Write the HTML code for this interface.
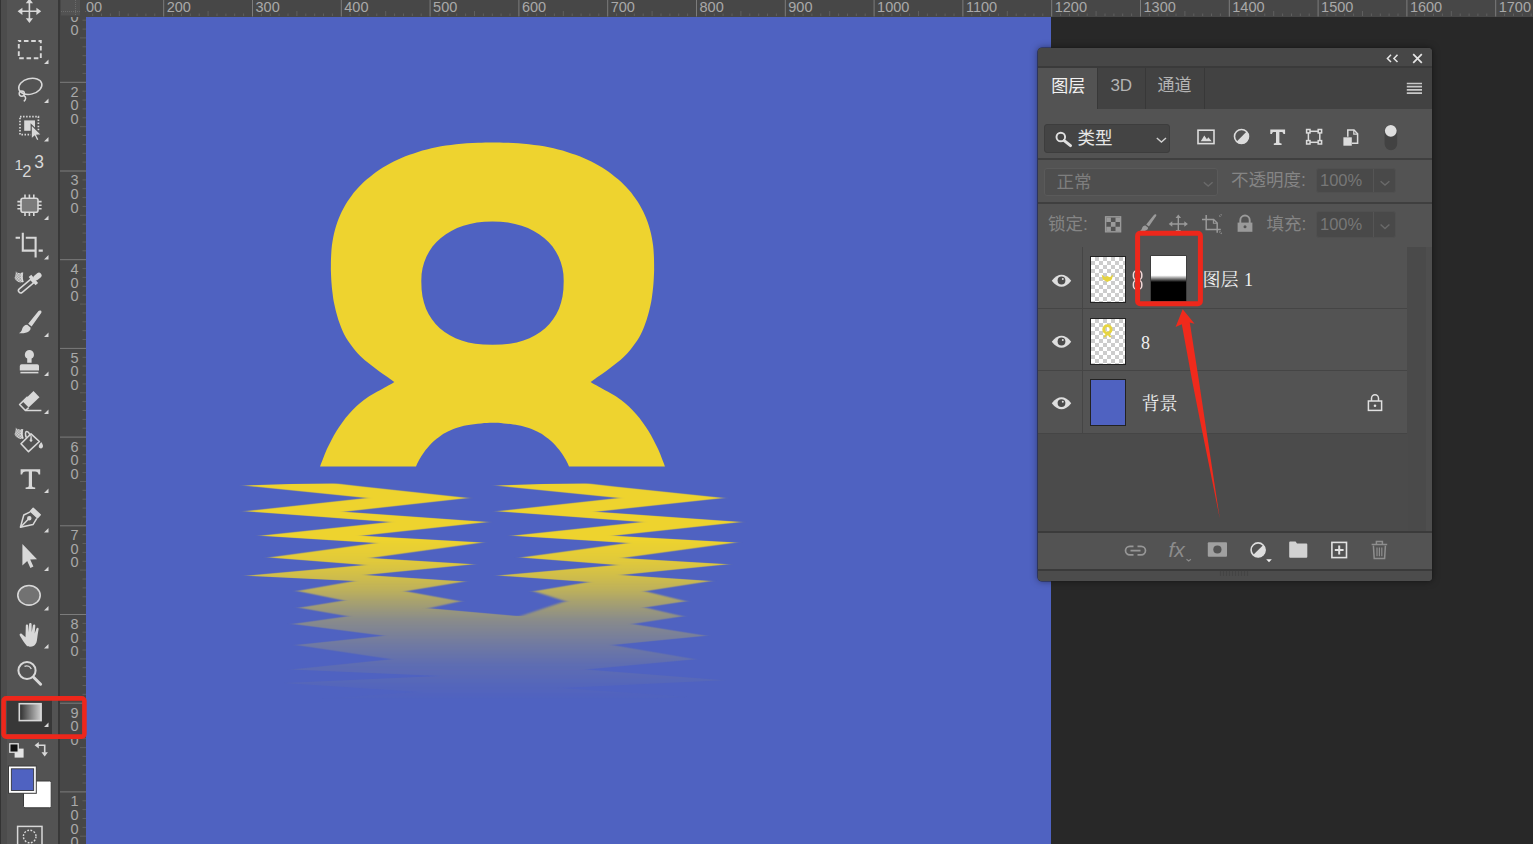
<!DOCTYPE html>
<html lang="zh-CN">
<head>
<meta charset="utf-8">
<title>Photoshop 图层蒙版</title>
<style>
*{box-sizing:border-box;margin:0;padding:0}
html,body{width:1533px;height:844px;overflow:hidden;background:#282828}
body{position:relative;font-family:"Liberation Sans","Noto Sans CJK SC",sans-serif;color:#ddd}
.abs{position:absolute}
#stage{position:absolute;left:0;top:0;width:1533px;height:844px;overflow:hidden;background:#282828}
#canvas{position:absolute;left:86px;top:17px;width:965px;height:827px;background:#4f62c1}
#art{position:absolute;left:0;top:0;width:1533px;height:844px}
#hruler{position:absolute;left:60px;top:0;width:1473px;height:17px;background:#474747}
#vruler{position:absolute;left:60px;top:17px;width:26px;height:827px;background:#474747}
#rulers{position:absolute;left:0;top:0;width:1533px;height:844px}
#rulers line{stroke:#5f5f5f;stroke-width:1}
#rulers line.M{stroke:#7c7c7c}
#rulers text{fill:#a9a9a9;font-family:"Liberation Sans",sans-serif;font-size:14.5px}
#corner{display:none}
#toolbar{position:absolute;left:0;top:0;width:58px;height:844px;background:#535353}
#toolbar .edge0{position:absolute;left:0;top:0;width:1px;height:844px;background:#333}
#toolbar .edge1{position:absolute;left:1px;top:0;width:6px;height:844px;background:#4c4c4c}
#tbline{position:absolute;left:58px;top:0;width:2px;height:844px;background:#383838}
#tools{position:absolute;left:0;top:0;width:90px;height:844px}
#gradsel{position:absolute;left:7px;top:700px;width:45px;height:34px;background:#383838}
/* panel */
#panel{position:absolute;left:1037.5px;top:47.5px;width:394px;height:533px;background:#535353;border-radius:4px;box-shadow:0 0 0 .6px rgba(30,30,30,.8),0 0 7px rgba(0,0,0,.5);overflow:hidden}
#panel .titlebar{position:absolute;left:0;top:0;width:394px;height:18.5px;background:#474747}
#panel .tline{position:absolute;left:0;top:18.5px;width:394px;height:1.5px;background:#3a3a3a}
#panel .tabbar{position:absolute;left:0;top:20px;width:394px;height:41.5px;background:#424242}
#panel .tab{position:absolute;top:20px;height:41.5px;font-size:17px;line-height:36px;text-align:center;color:#b4b4b4;border-right:1.5px solid #383838}
#panel .tab.on{background:#535353;color:#f2f2f2}
.sep{position:absolute;left:0;width:394px;height:2px;background:#3f3f3f}
.field{position:absolute;border-radius:3px;background:#454545;border:1px solid #3f3f3f}
.dim{color:#858585}
.lbl{position:absolute;font-size:16px;line-height:20px;white-space:nowrap}
.row{position:absolute;left:0;width:369px;height:62px;border-bottom:1.5px solid #454545}
.eyecol{position:absolute;left:0;top:0;width:45px;height:100%;border-right:1.5px solid #454545}
.lname{position:absolute;font-family:"Liberation Serif","Noto Serif CJK SC",serif;font-size:18px;line-height:20px;word-spacing:1px;color:#f0f0f0;white-space:nowrap}
.thumb{position:absolute;width:36.5px;height:47px;border:1px solid #222;background:#fff}
.checker{background-color:#fff;background-image:linear-gradient(45deg,#ccc 25%,transparent 25%,transparent 75%,#ccc 75%),linear-gradient(45deg,#ccc 25%,transparent 25%,transparent 75%,#ccc 75%);background-size:8px 8px;background-position:0 0,4px 4px}
#scrollcol{position:absolute;left:369.5px;top:199.500px;width:24.5px;height:284px;background:#4a4a4a}
#scrollcol i{position:absolute;right:0;top:0;width:6px;height:100%;background:#4e4e4e}
#empty{position:absolute;left:0;top:386.5px;width:370px;height:97px;background:#4b4b4b}
#botbar{position:absolute;left:0;top:483.500px;width:394px;height:38px;background:#535353;border-top:2px solid #3b3b3b}
#grip{position:absolute;left:0;top:521px;width:394px;height:12px;background:#4c4c4c;border-top:2px solid #3a3a3a}
#picons{position:absolute;left:0;top:0;width:394px;height:533px}
#anno{position:absolute;left:0;top:0;width:1533px;height:844px}
</style>
</head>
<body>
<div id="stage">
  <div id="canvas"></div>
  <svg id="art" viewBox="0 0 1533 844">
    <defs>
      <linearGradient id="fade" gradientUnits="userSpaceOnUse" x1="0" y1="540" x2="0" y2="700">
        <stop offset="0" stop-color="#fff" stop-opacity="1"/>
        <stop offset="0.125" stop-color="#fff" stop-opacity="0.92"/>
        <stop offset="0.22" stop-color="#fff" stop-opacity="0.82"/>
        <stop offset="0.31" stop-color="#fff" stop-opacity="0.7"/>
        <stop offset="0.38" stop-color="#fff" stop-opacity="0.57"/>
        <stop offset="0.5" stop-color="#fff" stop-opacity="0.37"/>
        <stop offset="0.656" stop-color="#fff" stop-opacity="0.21"/>
        <stop offset="0.78" stop-color="#fff" stop-opacity="0.1"/>
        <stop offset="0.906" stop-color="#fff" stop-opacity="0.04"/>
        <stop offset="1" stop-color="#fff" stop-opacity="0"/>
      </linearGradient>
      <mask id="fm" maskUnits="userSpaceOnUse" x="86" y="17" width="965" height="827">
        <rect x="86" y="17" width="965" height="524" fill="#fff"/>
        <rect x="86" y="540" width="965" height="304" fill="url(#fade)"/>
      </mask>
      <filter id="hb" x="-5%" y="-5%" width="110%" height="110%"><feGaussianBlur stdDeviation="3.4 0.4"/></filter>
    </defs>
    <path d="M394.4,381.9 C393.6,381.4 391.8,380.1 389.8,378.7 C387.8,377.3 385.0,375.4 382.6,373.7 C380.2,372.0 377.9,370.2 375.5,368.4 C373.1,366.6 370.8,365.0 368.4,363.1 C366.0,361.2 363.7,359.3 361.3,357.0 C358.9,354.7 356.8,352.5 354.2,349.2 C351.6,345.9 348.2,341.3 345.9,337.4 C343.6,333.4 341.9,329.4 340.4,325.5 C338.8,321.6 337.7,317.6 336.6,313.7 C335.5,309.8 334.5,305.4 333.8,301.8 C333.1,298.2 332.8,295.1 332.4,292.0 C332.0,288.9 331.8,286.4 331.5,282.9 C331.2,279.4 331.0,274.1 330.9,271.1 C330.8,268.1 330.9,267.8 330.9,265.0 C330.9,262.2 331.0,257.6 331.2,254.3 C331.3,251.1 331.6,248.4 331.9,245.5 C332.3,242.7 332.7,240.0 333.2,237.4 C333.7,234.7 334.3,232.2 335.0,229.7 C335.7,227.2 336.4,224.7 337.3,222.3 C338.1,219.9 339.1,217.6 340.1,215.3 C341.1,213.0 342.2,210.7 343.4,208.5 C344.5,206.3 345.8,204.2 347.1,202.1 C348.5,200.0 349.9,197.9 351.4,195.9 C352.9,193.9 354.4,192.0 356.1,190.1 C357.7,188.2 359.5,186.3 361.3,184.5 C363.1,182.7 364.9,181.0 366.9,179.3 C368.8,177.6 370.9,176.0 372.9,174.4 C375.0,172.8 377.2,171.3 379.4,169.8 C381.7,168.3 384.0,166.9 386.4,165.5 C388.7,164.1 391.2,162.8 393.7,161.6 C396.2,160.3 398.8,159.1 401.4,158.0 C404.0,156.9 406.7,155.8 409.5,154.8 C412.3,153.8 415.1,152.8 418.0,151.9 C420.9,151.0 423.9,150.2 426.9,149.5 C429.9,148.7 433.0,148.0 436.2,147.3 C439.4,146.7 442.6,146.1 445.9,145.6 C449.2,145.1 452.6,144.6 456.1,144.2 C459.6,143.9 463.1,143.5 466.8,143.3 C470.6,143.0 474.2,142.8 478.4,142.7 C482.7,142.6 487.8,142.5 492.5,142.5 C497.2,142.5 502.3,142.6 506.6,142.7 C510.8,142.8 514.4,143.0 518.2,143.3 C521.9,143.5 525.4,143.9 528.9,144.2 C532.4,144.6 535.8,145.1 539.1,145.6 C542.4,146.1 545.6,146.7 548.8,147.3 C552.0,148.0 555.1,148.7 558.1,149.5 C561.1,150.2 564.1,151.0 567.0,151.9 C569.9,152.8 572.7,153.8 575.5,154.8 C578.3,155.8 581.0,156.9 583.6,158.0 C586.2,159.1 588.8,160.3 591.3,161.6 C593.8,162.8 596.3,164.1 598.6,165.5 C601.0,166.9 603.3,168.3 605.6,169.8 C607.8,171.3 610.0,172.8 612.1,174.4 C614.1,176.0 616.2,177.6 618.1,179.3 C620.1,181.0 621.9,182.7 623.7,184.5 C625.5,186.3 627.3,188.2 628.9,190.1 C630.6,192.0 632.1,193.9 633.6,195.9 C635.1,197.9 636.5,200.0 637.9,202.1 C639.2,204.2 640.5,206.3 641.6,208.5 C642.8,210.7 643.9,213.0 644.9,215.3 C645.9,217.6 646.9,219.9 647.7,222.3 C648.6,224.7 649.3,227.2 650.0,229.7 C650.7,232.2 651.3,234.7 651.8,237.4 C652.3,240.0 652.7,242.7 653.1,245.5 C653.4,248.4 653.7,251.1 653.8,254.3 C654.0,257.6 654.1,262.2 654.1,265.0 C654.1,267.8 654.2,268.1 654.1,271.1 C654.0,274.1 653.8,279.4 653.5,282.9 C653.2,286.4 653.0,288.9 652.6,292.0 C652.2,295.1 651.9,298.2 651.2,301.8 C650.5,305.4 649.5,309.8 648.4,313.7 C647.3,317.6 646.1,321.6 644.6,325.5 C643.1,329.4 641.4,333.4 639.1,337.4 C636.8,341.3 633.4,345.9 630.8,349.2 C628.2,352.5 626.1,354.7 623.7,357.0 C621.3,359.3 619.0,361.2 616.6,363.1 C614.2,365.0 611.9,366.6 609.5,368.4 C607.1,370.2 604.8,372.0 602.4,373.7 C600.0,375.4 597.2,377.3 595.2,378.7 C593.2,380.1 591.4,381.4 590.6,381.9 C591.4,382.4 593.2,383.7 595.2,384.8 C597.2,385.9 599.3,387.0 602.4,388.7 C605.5,390.4 610.6,393.1 613.7,395.0 C616.8,396.9 618.6,398.1 621.1,400.0 C623.6,401.9 626.1,403.8 628.6,406.2 C631.1,408.6 633.6,411.4 636.0,414.1 C638.4,416.8 640.6,419.6 642.7,422.4 C644.8,425.2 646.7,428.2 648.5,431.1 C650.3,434.0 651.8,436.7 653.4,439.8 C655.0,442.9 656.9,446.6 658.4,449.8 C659.9,453.0 661.0,456.1 662.1,458.9 C663.2,461.7 664.5,465.2 665.0,466.5 L569.0,466.5 C568.5,465.4 567.2,462.2 565.8,459.8 C564.4,457.4 562.8,454.6 560.8,451.9 C558.8,449.2 556.1,445.8 553.7,443.4 C551.3,441.0 549.0,439.2 546.6,437.4 C544.2,435.6 542.5,434.2 539.5,432.7 C536.5,431.1 532.4,429.3 528.8,428.1 C525.2,426.9 522.2,426.1 518.1,425.3 C514.0,424.5 508.2,423.8 503.9,423.4 C499.6,423.0 496.3,422.8 492.5,422.8 C488.7,422.8 485.4,423.0 481.1,423.4 C476.8,423.8 471.0,424.5 466.9,425.3 C462.8,426.1 459.8,426.9 456.2,428.1 C452.6,429.3 448.5,431.1 445.5,432.7 C442.5,434.2 440.8,435.6 438.4,437.4 C436.0,439.2 433.7,441.0 431.3,443.4 C428.9,445.8 426.2,449.2 424.2,451.9 C422.2,454.6 420.6,457.4 419.2,459.8 C417.8,462.2 416.5,465.4 416.0,466.5 L320.0,466.5 C320.5,465.2 321.8,461.7 322.9,458.9 C324.0,456.1 325.2,453.0 326.6,449.8 C328.1,446.6 330.0,442.9 331.6,439.8 C333.2,436.7 334.7,434.0 336.5,431.1 C338.3,428.2 340.2,425.2 342.3,422.4 C344.4,419.6 346.6,416.8 349.0,414.1 C351.4,411.4 353.9,408.6 356.4,406.2 C358.9,403.8 361.4,401.9 363.9,400.0 C366.4,398.1 368.2,396.9 371.3,395.0 C374.4,393.1 379.5,390.4 382.6,388.7 C385.7,387.0 387.8,385.9 389.8,384.8 C391.8,383.7 393.6,382.4 394.4,381.9Z M563.7,281.0 L563.4,289.5 L562.5,296.4 L561.0,302.8 L559.0,308.7 L556.3,314.2 L553.1,319.3 L549.4,323.9 L545.2,328.2 L540.4,332.0 L535.2,335.3 L529.5,338.2 L523.4,340.6 L516.8,342.4 L509.7,343.7 L501.9,344.5 L492.5,344.8 L483.1,344.5 L475.3,343.7 L468.2,342.4 L461.6,340.6 L455.5,338.2 L449.8,335.3 L444.6,332.0 L439.8,328.2 L435.6,323.9 L431.9,319.3 L428.7,314.2 L426.0,308.7 L424.0,302.8 L422.5,296.4 L421.6,289.5 L421.3,281.0 L421.6,274.1 L422.6,268.0 L424.2,262.2 L426.4,256.7 L429.2,251.4 L432.5,246.6 L436.5,242.0 L440.9,237.9 L445.9,234.2 L451.3,230.9 L457.1,228.1 L463.4,225.7 L470.0,223.9 L476.9,222.6 L484.3,221.8 L492.5,221.5 L500.7,221.8 L508.1,222.6 L515.0,223.9 L521.6,225.7 L527.9,228.1 L533.7,230.9 L539.1,234.2 L544.1,237.9 L548.5,242.0 L552.5,246.6 L555.8,251.4 L558.6,256.7 L560.8,262.2 L562.4,268.0 L563.4,274.1Z" fill="#eed32f" fill-rule="evenodd"/>
    <g mask="url(#fm)"><polygon points="244.0,485.6 290.0,484.0 336.0,483.4 362.0,486.6 468.2,498.1 343.8,511.8 487.7,521.9 361.5,535.8 482.4,542.5 370.4,558.0 473.5,564.2 365.0,574.9 464.6,581.6 405.6,591.3 460.4,601.3 429.0,608.2 519.9,616.3 565.3,601.3 534.0,591.3 588.7,581.9 498.0,575.6 617.1,565.1 521.1,557.5 627.8,542.9 512.2,535.8 642.0,521.9 497.1,511.2 618.9,498.1 496.0,485.6 542.0,484.0 588.0,483.4 614.0,486.6 723.5,498.1 595.8,511.8 741.0,521.9 613.5,535.8 736.0,542.5 622.4,558.0 728.0,564.2 621.0,574.9 710.8,581.0 645.0,591.3 685.8,601.3 645.0,607.6 682.7,616.3 632.6,623.9 706.1,635.7 612.2,645.1 695.2,659.2 585.6,669.6 723.4,680.2 560.0,688.0 690.0,697.0 540.0,704.0 330.0,712.0 300.0,700.0 420.0,692.0 285.0,683.0 440.0,676.0 291.3,669.6 391.5,659.2 296.0,645.1 383.7,635.7 292.9,623.9 347.7,616.3 299.3,607.8 343.8,600.6 297.5,590.9 354.4,581.1 246.0,575.8 365.1,565.1 269.1,557.5 375.8,542.9 260.2,535.8 390.0,521.9 245.1,511.2 366.9,498.1" fill="#eed32f" filter="url(#hb)"/></g>
  </svg>

  <div id="hruler"></div>
  <div id="vruler"></div>
  <div id="corner"></div>
  <svg id="rulers" viewBox="0 0 1533 844">
    <g><line x1="82.5" y1="20.2" x2="86" y2="20.2" /><line x1="82.5" y1="29.1" x2="86" y2="29.1" /><line x1="80" y1="37.9" x2="86" y2="37.9" /><line x1="82.5" y1="46.8" x2="86" y2="46.8" /><line x1="82.5" y1="55.7" x2="86" y2="55.7" /><line x1="82.5" y1="64.6" x2="86" y2="64.6" /><line x1="82.5" y1="73.4" x2="86" y2="73.4" /><line class="M" x1="60" y1="82.3" x2="86" y2="82.3" /><line x1="82.5" y1="91.2" x2="86" y2="91.2" /><line x1="82.5" y1="100.0" x2="86" y2="100.0" /><line x1="82.5" y1="108.9" x2="86" y2="108.9" /><line x1="82.5" y1="117.8" x2="86" y2="117.8" /><line x1="80" y1="126.7" x2="86" y2="126.7" /><line x1="82.5" y1="135.5" x2="86" y2="135.5" /><line x1="82.5" y1="144.4" x2="86" y2="144.4" /><line x1="82.5" y1="153.3" x2="86" y2="153.3" /><line x1="82.5" y1="162.1" x2="86" y2="162.1" /><line class="M" x1="60" y1="171.0" x2="86" y2="171.0" /><line x1="82.5" y1="179.9" x2="86" y2="179.9" /><line x1="82.5" y1="188.7" x2="86" y2="188.7" /><line x1="82.5" y1="197.6" x2="86" y2="197.6" /><line x1="82.5" y1="206.5" x2="86" y2="206.5" /><line x1="80" y1="215.3" x2="86" y2="215.3" /><line x1="82.5" y1="224.2" x2="86" y2="224.2" /><line x1="82.5" y1="233.1" x2="86" y2="233.1" /><line x1="82.5" y1="242.0" x2="86" y2="242.0" /><line x1="82.5" y1="250.8" x2="86" y2="250.8" /><line class="M" x1="60" y1="259.7" x2="86" y2="259.7" /><line x1="82.5" y1="268.6" x2="86" y2="268.6" /><line x1="82.5" y1="277.4" x2="86" y2="277.4" /><line x1="82.5" y1="286.3" x2="86" y2="286.3" /><line x1="82.5" y1="295.2" x2="86" y2="295.2" /><line x1="80" y1="304.1" x2="86" y2="304.1" /><line x1="82.5" y1="312.9" x2="86" y2="312.9" /><line x1="82.5" y1="321.8" x2="86" y2="321.8" /><line x1="82.5" y1="330.7" x2="86" y2="330.7" /><line x1="82.5" y1="339.5" x2="86" y2="339.5" /><line class="M" x1="60" y1="348.4" x2="86" y2="348.4" /><line x1="82.5" y1="357.3" x2="86" y2="357.3" /><line x1="82.5" y1="366.1" x2="86" y2="366.1" /><line x1="82.5" y1="375.0" x2="86" y2="375.0" /><line x1="82.5" y1="383.9" x2="86" y2="383.9" /><line x1="80" y1="392.8" x2="86" y2="392.8" /><line x1="82.5" y1="401.6" x2="86" y2="401.6" /><line x1="82.5" y1="410.5" x2="86" y2="410.5" /><line x1="82.5" y1="419.4" x2="86" y2="419.4" /><line x1="82.5" y1="428.2" x2="86" y2="428.2" /><line class="M" x1="60" y1="437.1" x2="86" y2="437.1" /><line x1="82.5" y1="446.0" x2="86" y2="446.0" /><line x1="82.5" y1="454.8" x2="86" y2="454.8" /><line x1="82.5" y1="463.7" x2="86" y2="463.7" /><line x1="82.5" y1="472.6" x2="86" y2="472.6" /><line x1="80" y1="481.5" x2="86" y2="481.5" /><line x1="82.5" y1="490.3" x2="86" y2="490.3" /><line x1="82.5" y1="499.2" x2="86" y2="499.2" /><line x1="82.5" y1="508.1" x2="86" y2="508.1" /><line x1="82.5" y1="516.9" x2="86" y2="516.9" /><line class="M" x1="60" y1="525.8" x2="86" y2="525.8" /><line x1="82.5" y1="534.7" x2="86" y2="534.7" /><line x1="82.5" y1="543.5" x2="86" y2="543.5" /><line x1="82.5" y1="552.4" x2="86" y2="552.4" /><line x1="82.5" y1="561.3" x2="86" y2="561.3" /><line x1="80" y1="570.1" x2="86" y2="570.1" /><line x1="82.5" y1="579.0" x2="86" y2="579.0" /><line x1="82.5" y1="587.9" x2="86" y2="587.9" /><line x1="82.5" y1="596.8" x2="86" y2="596.8" /><line x1="82.5" y1="605.6" x2="86" y2="605.6" /><line class="M" x1="60" y1="614.5" x2="86" y2="614.5" /><line x1="82.5" y1="623.4" x2="86" y2="623.4" /><line x1="82.5" y1="632.2" x2="86" y2="632.2" /><line x1="82.5" y1="641.1" x2="86" y2="641.1" /><line x1="82.5" y1="650.0" x2="86" y2="650.0" /><line x1="80" y1="658.9" x2="86" y2="658.9" /><line x1="82.5" y1="667.7" x2="86" y2="667.7" /><line x1="82.5" y1="676.6" x2="86" y2="676.6" /><line x1="82.5" y1="685.5" x2="86" y2="685.5" /><line x1="82.5" y1="694.3" x2="86" y2="694.3" /><line class="M" x1="60" y1="703.2" x2="86" y2="703.2" /><line x1="82.5" y1="712.1" x2="86" y2="712.1" /><line x1="82.5" y1="720.9" x2="86" y2="720.9" /><line x1="82.5" y1="729.8" x2="86" y2="729.8" /><line x1="82.5" y1="738.7" x2="86" y2="738.7" /><line x1="80" y1="747.6" x2="86" y2="747.6" /><line x1="82.5" y1="756.4" x2="86" y2="756.4" /><line x1="82.5" y1="765.3" x2="86" y2="765.3" /><line x1="82.5" y1="774.2" x2="86" y2="774.2" /><line x1="82.5" y1="783.0" x2="86" y2="783.0" /><line class="M" x1="60" y1="791.9" x2="86" y2="791.9" /><line x1="82.5" y1="800.8" x2="86" y2="800.8" /><line x1="82.5" y1="809.6" x2="86" y2="809.6" /><line x1="82.5" y1="818.5" x2="86" y2="818.5" /><line x1="82.5" y1="827.4" x2="86" y2="827.4" /><line x1="80" y1="836.2" x2="86" y2="836.2" /></g>
    <g><text x="74.5" y="8.0" text-anchor="middle">1</text><text x="74.5" y="21.6" text-anchor="middle">0</text><text x="74.5" y="35.2" text-anchor="middle">0</text><text x="74.5" y="96.7" text-anchor="middle">2</text><text x="74.5" y="110.3" text-anchor="middle">0</text><text x="74.5" y="123.9" text-anchor="middle">0</text><text x="74.5" y="185.4" text-anchor="middle">3</text><text x="74.5" y="199.0" text-anchor="middle">0</text><text x="74.5" y="212.6" text-anchor="middle">0</text><text x="74.5" y="274.1" text-anchor="middle">4</text><text x="74.5" y="287.7" text-anchor="middle">0</text><text x="74.5" y="301.3" text-anchor="middle">0</text><text x="74.5" y="362.8" text-anchor="middle">5</text><text x="74.5" y="376.4" text-anchor="middle">0</text><text x="74.5" y="390.0" text-anchor="middle">0</text><text x="74.5" y="451.5" text-anchor="middle">6</text><text x="74.5" y="465.1" text-anchor="middle">0</text><text x="74.5" y="478.7" text-anchor="middle">0</text><text x="74.5" y="540.2" text-anchor="middle">7</text><text x="74.5" y="553.8" text-anchor="middle">0</text><text x="74.5" y="567.4" text-anchor="middle">0</text><text x="74.5" y="628.9" text-anchor="middle">8</text><text x="74.5" y="642.5" text-anchor="middle">0</text><text x="74.5" y="656.1" text-anchor="middle">0</text><text x="74.5" y="717.6" text-anchor="middle">9</text><text x="74.5" y="731.2" text-anchor="middle">0</text><text x="74.5" y="744.8" text-anchor="middle">0</text><text x="74.5" y="806.3" text-anchor="middle">1</text><text x="74.5" y="819.9" text-anchor="middle">0</text><text x="74.5" y="833.5" text-anchor="middle">0</text><text x="74.5" y="847.1" text-anchor="middle">0</text><text x="74.5" y="895.0" text-anchor="middle">1</text><text x="74.5" y="908.6" text-anchor="middle">1</text><text x="74.5" y="922.2" text-anchor="middle">0</text><text x="74.5" y="935.8" text-anchor="middle">0</text></g>
    <rect x="60" y="0" width="1473" height="17" fill="#474747"/>
    <g><line x1="66.0" y1="13.5" x2="66.0" y2="16" /><line class="M" x1="74.9" y1="0" x2="74.9" y2="16.5" /><line x1="83.8" y1="13.5" x2="83.8" y2="16" /><line x1="92.7" y1="13.5" x2="92.7" y2="16" /><line x1="101.5" y1="13.5" x2="101.5" y2="16" /><line x1="110.4" y1="13.5" x2="110.4" y2="16" /><line x1="119.3" y1="11" x2="119.3" y2="16" /><line x1="128.2" y1="13.5" x2="128.2" y2="16" /><line x1="137.1" y1="13.5" x2="137.1" y2="16" /><line x1="145.9" y1="13.5" x2="145.9" y2="16" /><line x1="154.8" y1="13.5" x2="154.8" y2="16" /><line class="M" x1="163.7" y1="0" x2="163.7" y2="16.5" /><line x1="172.6" y1="13.5" x2="172.6" y2="16" /><line x1="181.5" y1="13.5" x2="181.5" y2="16" /><line x1="190.3" y1="13.5" x2="190.3" y2="16" /><line x1="199.2" y1="13.5" x2="199.2" y2="16" /><line x1="208.1" y1="11" x2="208.1" y2="16" /><line x1="217.0" y1="13.5" x2="217.0" y2="16" /><line x1="225.9" y1="13.5" x2="225.9" y2="16" /><line x1="234.7" y1="13.5" x2="234.7" y2="16" /><line x1="243.6" y1="13.5" x2="243.6" y2="16" /><line class="M" x1="252.5" y1="0" x2="252.5" y2="16.5" /><line x1="261.4" y1="13.5" x2="261.4" y2="16" /><line x1="270.3" y1="13.5" x2="270.3" y2="16" /><line x1="279.1" y1="13.5" x2="279.1" y2="16" /><line x1="288.0" y1="13.5" x2="288.0" y2="16" /><line x1="296.9" y1="11" x2="296.9" y2="16" /><line x1="305.8" y1="13.5" x2="305.8" y2="16" /><line x1="314.7" y1="13.5" x2="314.7" y2="16" /><line x1="323.5" y1="13.5" x2="323.5" y2="16" /><line x1="332.4" y1="13.5" x2="332.4" y2="16" /><line class="M" x1="341.3" y1="0" x2="341.3" y2="16.5" /><line x1="350.2" y1="13.5" x2="350.2" y2="16" /><line x1="359.1" y1="13.5" x2="359.1" y2="16" /><line x1="367.9" y1="13.5" x2="367.9" y2="16" /><line x1="376.8" y1="13.5" x2="376.8" y2="16" /><line x1="385.7" y1="11" x2="385.7" y2="16" /><line x1="394.6" y1="13.5" x2="394.6" y2="16" /><line x1="403.5" y1="13.5" x2="403.5" y2="16" /><line x1="412.3" y1="13.5" x2="412.3" y2="16" /><line x1="421.2" y1="13.5" x2="421.2" y2="16" /><line class="M" x1="430.1" y1="0" x2="430.1" y2="16.5" /><line x1="439.0" y1="13.5" x2="439.0" y2="16" /><line x1="447.9" y1="13.5" x2="447.9" y2="16" /><line x1="456.7" y1="13.5" x2="456.7" y2="16" /><line x1="465.6" y1="13.5" x2="465.6" y2="16" /><line x1="474.5" y1="11" x2="474.5" y2="16" /><line x1="483.4" y1="13.5" x2="483.4" y2="16" /><line x1="492.3" y1="13.5" x2="492.3" y2="16" /><line x1="501.1" y1="13.5" x2="501.1" y2="16" /><line x1="510.0" y1="13.5" x2="510.0" y2="16" /><line class="M" x1="518.9" y1="0" x2="518.9" y2="16.5" /><line x1="527.8" y1="13.5" x2="527.8" y2="16" /><line x1="536.7" y1="13.5" x2="536.7" y2="16" /><line x1="545.5" y1="13.5" x2="545.5" y2="16" /><line x1="554.4" y1="13.5" x2="554.4" y2="16" /><line x1="563.3" y1="11" x2="563.3" y2="16" /><line x1="572.2" y1="13.5" x2="572.2" y2="16" /><line x1="581.1" y1="13.5" x2="581.1" y2="16" /><line x1="589.9" y1="13.5" x2="589.9" y2="16" /><line x1="598.8" y1="13.5" x2="598.8" y2="16" /><line class="M" x1="607.7" y1="0" x2="607.7" y2="16.5" /><line x1="616.6" y1="13.5" x2="616.6" y2="16" /><line x1="625.5" y1="13.5" x2="625.5" y2="16" /><line x1="634.3" y1="13.5" x2="634.3" y2="16" /><line x1="643.2" y1="13.5" x2="643.2" y2="16" /><line x1="652.1" y1="11" x2="652.1" y2="16" /><line x1="661.0" y1="13.5" x2="661.0" y2="16" /><line x1="669.9" y1="13.5" x2="669.9" y2="16" /><line x1="678.7" y1="13.5" x2="678.7" y2="16" /><line x1="687.6" y1="13.5" x2="687.6" y2="16" /><line class="M" x1="696.5" y1="0" x2="696.5" y2="16.5" /><line x1="705.4" y1="13.5" x2="705.4" y2="16" /><line x1="714.3" y1="13.5" x2="714.3" y2="16" /><line x1="723.1" y1="13.5" x2="723.1" y2="16" /><line x1="732.0" y1="13.5" x2="732.0" y2="16" /><line x1="740.9" y1="11" x2="740.9" y2="16" /><line x1="749.8" y1="13.5" x2="749.8" y2="16" /><line x1="758.7" y1="13.5" x2="758.7" y2="16" /><line x1="767.5" y1="13.5" x2="767.5" y2="16" /><line x1="776.4" y1="13.5" x2="776.4" y2="16" /><line class="M" x1="785.3" y1="0" x2="785.3" y2="16.5" /><line x1="794.2" y1="13.5" x2="794.2" y2="16" /><line x1="803.1" y1="13.5" x2="803.1" y2="16" /><line x1="811.9" y1="13.5" x2="811.9" y2="16" /><line x1="820.8" y1="13.5" x2="820.8" y2="16" /><line x1="829.7" y1="11" x2="829.7" y2="16" /><line x1="838.6" y1="13.5" x2="838.6" y2="16" /><line x1="847.5" y1="13.5" x2="847.5" y2="16" /><line x1="856.3" y1="13.5" x2="856.3" y2="16" /><line x1="865.2" y1="13.5" x2="865.2" y2="16" /><line class="M" x1="874.1" y1="0" x2="874.1" y2="16.5" /><line x1="883.0" y1="13.5" x2="883.0" y2="16" /><line x1="891.9" y1="13.5" x2="891.9" y2="16" /><line x1="900.7" y1="13.5" x2="900.7" y2="16" /><line x1="909.6" y1="13.5" x2="909.6" y2="16" /><line x1="918.5" y1="11" x2="918.5" y2="16" /><line x1="927.4" y1="13.5" x2="927.4" y2="16" /><line x1="936.3" y1="13.5" x2="936.3" y2="16" /><line x1="945.1" y1="13.5" x2="945.1" y2="16" /><line x1="954.0" y1="13.5" x2="954.0" y2="16" /><line class="M" x1="962.9" y1="0" x2="962.9" y2="16.5" /><line x1="971.8" y1="13.5" x2="971.8" y2="16" /><line x1="980.7" y1="13.5" x2="980.7" y2="16" /><line x1="989.5" y1="13.5" x2="989.5" y2="16" /><line x1="998.4" y1="13.5" x2="998.4" y2="16" /><line x1="1007.3" y1="11" x2="1007.3" y2="16" /><line x1="1016.2" y1="13.5" x2="1016.2" y2="16" /><line x1="1025.1" y1="13.5" x2="1025.1" y2="16" /><line x1="1033.9" y1="13.5" x2="1033.9" y2="16" /><line x1="1042.8" y1="13.5" x2="1042.8" y2="16" /><line class="M" x1="1051.7" y1="0" x2="1051.7" y2="16.5" /><line x1="1060.6" y1="13.5" x2="1060.6" y2="16" /><line x1="1069.5" y1="13.5" x2="1069.5" y2="16" /><line x1="1078.3" y1="13.5" x2="1078.3" y2="16" /><line x1="1087.2" y1="13.5" x2="1087.2" y2="16" /><line x1="1096.1" y1="11" x2="1096.1" y2="16" /><line x1="1105.0" y1="13.5" x2="1105.0" y2="16" /><line x1="1113.9" y1="13.5" x2="1113.9" y2="16" /><line x1="1122.7" y1="13.5" x2="1122.7" y2="16" /><line x1="1131.6" y1="13.5" x2="1131.6" y2="16" /><line class="M" x1="1140.5" y1="0" x2="1140.5" y2="16.5" /><line x1="1149.4" y1="13.5" x2="1149.4" y2="16" /><line x1="1158.3" y1="13.5" x2="1158.3" y2="16" /><line x1="1167.1" y1="13.5" x2="1167.1" y2="16" /><line x1="1176.0" y1="13.5" x2="1176.0" y2="16" /><line x1="1184.9" y1="11" x2="1184.9" y2="16" /><line x1="1193.8" y1="13.5" x2="1193.8" y2="16" /><line x1="1202.7" y1="13.5" x2="1202.7" y2="16" /><line x1="1211.5" y1="13.5" x2="1211.5" y2="16" /><line x1="1220.4" y1="13.5" x2="1220.4" y2="16" /><line class="M" x1="1229.3" y1="0" x2="1229.3" y2="16.5" /><line x1="1238.2" y1="13.5" x2="1238.2" y2="16" /><line x1="1247.1" y1="13.5" x2="1247.1" y2="16" /><line x1="1255.9" y1="13.5" x2="1255.9" y2="16" /><line x1="1264.8" y1="13.5" x2="1264.8" y2="16" /><line x1="1273.7" y1="11" x2="1273.7" y2="16" /><line x1="1282.6" y1="13.5" x2="1282.6" y2="16" /><line x1="1291.5" y1="13.5" x2="1291.5" y2="16" /><line x1="1300.3" y1="13.5" x2="1300.3" y2="16" /><line x1="1309.2" y1="13.5" x2="1309.2" y2="16" /><line class="M" x1="1318.1" y1="0" x2="1318.1" y2="16.5" /><line x1="1327.0" y1="13.5" x2="1327.0" y2="16" /><line x1="1335.9" y1="13.5" x2="1335.9" y2="16" /><line x1="1344.7" y1="13.5" x2="1344.7" y2="16" /><line x1="1353.6" y1="13.5" x2="1353.6" y2="16" /><line x1="1362.5" y1="11" x2="1362.5" y2="16" /><line x1="1371.4" y1="13.5" x2="1371.4" y2="16" /><line x1="1380.3" y1="13.5" x2="1380.3" y2="16" /><line x1="1389.1" y1="13.5" x2="1389.1" y2="16" /><line x1="1398.0" y1="13.5" x2="1398.0" y2="16" /><line class="M" x1="1406.9" y1="0" x2="1406.9" y2="16.5" /><line x1="1415.8" y1="13.5" x2="1415.8" y2="16" /><line x1="1424.7" y1="13.5" x2="1424.7" y2="16" /><line x1="1433.5" y1="13.5" x2="1433.5" y2="16" /><line x1="1442.4" y1="13.5" x2="1442.4" y2="16" /><line x1="1451.3" y1="11" x2="1451.3" y2="16" /><line x1="1460.2" y1="13.5" x2="1460.2" y2="16" /><line x1="1469.1" y1="13.5" x2="1469.1" y2="16" /><line x1="1477.9" y1="13.5" x2="1477.9" y2="16" /><line x1="1486.8" y1="13.5" x2="1486.8" y2="16" /><line class="M" x1="1495.7" y1="0" x2="1495.7" y2="16.5" /><line x1="1504.6" y1="13.5" x2="1504.6" y2="16" /><line x1="1513.5" y1="13.5" x2="1513.5" y2="16" /><line x1="1522.3" y1="13.5" x2="1522.3" y2="16" /><line x1="1531.2" y1="13.5" x2="1531.2" y2="16" /></g>
    <g><text x="77.9" y="11.9">100</text><text x="166.7" y="11.9">200</text><text x="255.5" y="11.9">300</text><text x="344.3" y="11.9">400</text><text x="433.1" y="11.9">500</text><text x="521.9" y="11.9">600</text><text x="610.7" y="11.9">700</text><text x="699.5" y="11.9">800</text><text x="788.3" y="11.9">900</text><text x="877.1" y="11.9">1000</text><text x="965.9" y="11.9">1100</text><text x="1054.7" y="11.9">1200</text><text x="1143.5" y="11.9">1300</text><text x="1232.3" y="11.9">1400</text><text x="1321.1" y="11.9">1500</text><text x="1409.9" y="11.9">1600</text><text x="1498.7" y="11.9">1700</text><text x="1587.5" y="11.9">1800</text></g>
    <rect x="60" y="0" width="25.5" height="17" fill="#474747"/>
    <rect x="61" y="0" width="19" height="15.5" fill="#525252"/>
    <path d="M61,11.500H80 M75.500,0V15.500" stroke="#6a6a6a" stroke-width="1" stroke-dasharray="1 1"/>
  </svg>

  <div id="toolbar"><div class="edge0"></div><div class="edge1"></div></div>
  <div id="tbline"></div>
  <div id="gradsel"></div>
  <svg id="tools" class="abs" style="left:0;top:0" width="90" height="844" viewBox="0 0 90 844" fill="none" stroke="none">
 <g fill="#d8d8d8">
  <!-- flyout corner triangles -->
  <path d="M48.5,59.5v4.5h-4.5z M48.5,98.5v4.5h-4.5z M48.5,137v4.5h-4.5z M48.5,215.5v4.5h-4.5z M48.5,255v4.5h-4.5z M48.5,332.5v4.5h-4.5z M48.5,371.5v4.5h-4.5z M48.5,409.5v4.5h-4.5z M48.5,488.5v4.5h-4.5z M48.5,528v4.5h-4.5z M48.5,566.5v4.5h-4.5z M48.5,606v4.5h-4.5z M48.5,644v4.5h-4.5z M48.5,722.5v4.5h-4.5z"/>
 </g>
 <!-- move -->
 <g stroke="#d8d8d8" stroke-width="1.6" fill="#d8d8d8">
  <path d="M29.4,1V21 M19,11.3H40" fill="none"/>
  <path d="M29.4,-1.5l3.6,4.8h-7.2z M29.4,23l3.6,-4.8h-7.2z M17.6,11.3l4.8,-3.6v7.2z M41.2,11.3l-4.8,-3.6v7.2z" stroke="none"/>
 </g>
 <!-- marquee -->
 <rect x="18.8" y="41" width="22" height="17.2" stroke="#d8d8d8" stroke-width="1.9" stroke-dasharray="4.6 2.7" stroke-dashoffset="2.2"/>
 <!-- lasso -->
 <g stroke="#d8d8d8" stroke-width="1.5">
  <ellipse cx="30.3" cy="86.3" rx="11.8" ry="7.8" transform="rotate(-14 30.3 86.3)"/>
  <circle cx="21.8" cy="93.6" r="2.6"/>
  <path d="M23.8,95.5c2.5,1.5 2.4,4.2 0,5.8"/>
 </g>
 <!-- object select -->
 <rect x="20" y="116.6" width="18.4" height="18" stroke="#d8d8d8" stroke-width="1.7" stroke-dasharray="1.5 1.55"/>
 <rect x="24.2" y="120.4" width="10.8" height="10.4" fill="#d8d8d8"/>
 <path d="M31.2,124.6v14.6l3.4,-3 2.2,4.6 2.3,-1.1 -2.2,-4.5 4.6,-.4z" fill="#d8d8d8" stroke="#535353" stroke-width="1.2"/>
 <!-- 123 count -->
 <g fill="#d8d8d8" font-family="Liberation Sans, sans-serif">
  <text x="14.6" y="170.2" font-size="15.5">1</text>
  <text x="22.2" y="177" font-size="16.5">2</text>
  <text x="34.3" y="168.4" font-size="17.5">3</text>
 </g>
 <!-- patch -->
 <g stroke="#d8d8d8" stroke-width="1.6">
  <rect x="21" y="198.2" width="17" height="14" rx="2" fill="#7a7a7a"/>
  <path d="M25,194.5v4 M29.4,194.5v4 M33.8,194.5v4 M25,212v4 M29.4,212v4 M33.8,212v4 M17.4,201.6h4 M17.4,205.2h4 M17.4,208.8h4 M37.6,201.6h4 M37.6,205.2h4 M37.6,208.8h4"/>
 </g>
 <!-- crop -->
 <g stroke="#d8d8d8" stroke-width="2.1">
  <path d="M22.8,232.8V250.6H36 M15.6,237.8h4.4 M25.8,237.8H35.6V257.4 M38.6,250.6h4.2"/>
 </g>
 <!-- eyedropper + sampler -->
 <defs>
  <pattern id="chk" width="2.6" height="2.6" patternUnits="userSpaceOnUse"><rect width="2.6" height="2.6" fill="#8a8a8a"/><rect width="1.3" height="1.3" fill="#e8e8e8"/><rect x="1.3" y="1.3" width="1.3" height="1.3" fill="#e8e8e8"/></pattern>
 </defs>
 <g>
  <path d="M15.800,271.200c.9,1.300 2.500,2 4.500,1.900l3,-.5c-.8,3.200 -.6,6.100 .5,9.400l-3.600,.5c-2.700,-.6 -4.700,-2.200 -5.700,-4.600 .9,-2.300 1.300,-4.400 1.300,-6.700z" fill="url(#chk)"/>
  <path d="M22.200,272.700c-.8,3.200 -.6,6.100 .5,9.400" stroke="#dedede" stroke-width="1.300" fill="none"/>
  <g transform="rotate(50 29.800 283)">
   <rect x="27.100" y="268.500" width="5.400" height="9" rx="2.600" fill="#d8d8d8"/>
   <rect x="24.500" y="276.600" width="10.600" height="3.400" fill="#d8d8d8"/>
   <path d="M27.500,280h4.600v14.800a2.300,2.300 0 0 1 -4.600,0z" stroke="#d8d8d8" stroke-width="1.500"/>
  </g>
 </g>
 <!-- brush -->
 <g fill="#d8d8d8">
  <path d="M40.300,310.500c1.300,.2 1.500,1.400 .9,2.400l-9.600,13.500 -3.400,-2.700 10.300,-12.600c.5,-.6 1.100,-.8 1.800,-.6z"/>
  <path d="M27.200,324.800l3.300,2.700c.7,3.200 -3,6.400 -11.600,5.700 2.500,-1.200 2.600,-2.500 3.300,-4.500 .7,-2.100 2.400,-3.900 5,-3.900z"/>
 </g>
 <!-- stamp -->
 <g fill="#d8d8d8">
  <path d="M29.400,350a4.600,4.600 0 0 1 2.200,8.600v4.200h-4.400v-4.200a4.600,4.600 0 0 1 2.200,-8.600z"/>
  <path d="M21.600,364.200h15.600a1.800,1.800 0 0 1 1.800,1.800v4.400h-19.200v-4.400a1.800,1.800 0 0 1 1.800,-1.800z"/>
  <rect x="20.400" y="371.800" width="18" height="1.600"/>
 </g>
 <!-- eraser -->
 <g>
  <path d="M33.500,391l6,6.200 -10.800,10.400 -6,-6.200z" fill="#d8d8d8"/>
  <path d="M27.600,396.800l-8,7.700 5.800,6h16" stroke="#d8d8d8" stroke-width="1.600" stroke-linejoin="round"/>
  <path d="M28.700,407.600l-3.300,2.900" stroke="#d8d8d8" stroke-width="1.600"/>
 </g>
 <!-- bucket + sampler -->
 <g>
  <path d="M15.800,427.600c.9,1.300 2.500,2 4.500,1.900l3,-.5c-.8,3.200 -.6,6.100 .5,9.400l-3.600,.5c-2.700,-.6 -4.700,-2.200 -5.700,-4.600 .9,-2.300 1.300,-4.400 1.300,-6.700z" fill="url(#chk)"/>
  <path d="M22.200,429.100c-.8,3.200 -.6,6.100 .5,9.400" stroke="#dedede" stroke-width="1.300" fill="none"/>
  <path d="M31,433.800l8.400,7.700 -10.900,10.200 -7.500,-8z" stroke="#d8d8d8" stroke-width="1.600" stroke-linejoin="round"/>
  <path d="M26.400,437.600c-1.600,-3.400 -1,-6.200 .4,-6.100 1.600,.1 2.800,2.600 3.400,4.600" stroke="#d8d8d8" stroke-width="1.500"/>
  <path d="M31.100,435.600l.6,3.800c1.100,1.300 -.3,2.600 -1.300,1.900 -1,-.8 -.2,-1.800 .1,-2.300z" fill="#d8d8d8" stroke="#d8d8d8" stroke-width=".6"/>
  <path d="M41.200,442c1.800,2.300 2.300,4.300 1.400,5.600 -1,1.300 -3,1.100 -3.700,-.3 -.7,-1.500 .8,-3.300 2.300,-5.300z" fill="#d8d8d8"/>
 </g>
 <!-- T -->
 <path d="M20.600,469.200h19.600v5.400h-1.600c-.3,-2.200 -1.400,-3.200 -3.600,-3.200h-3v14.200c0,1.300 .6,1.800 3.200,1.900v1.500h-9.600v-1.500c2.600,-.1 3.200,-.6 3.200,-1.900v-14.200h-3c-2.200,0 -3.300,1 -3.600,3.200h-1.600z" fill="#d8d8d8"/>
 <!-- pen -->
 <g stroke="#d8d8d8" stroke-width="1.500" stroke-linejoin="round">
  <path d="M33.200,508.300l7,6.400 -2.700,3 -7,-6.400z" fill="#d8d8d8"/>
  <path d="M30.200,511.800l-6.400,3.200 -3.400,12.200 12.600,-2.600 3.800,-6.200"/>
  <path d="M20.600,527l8.200,-8.200"/>
  <circle cx="29.300" cy="518.300" r="1.500" fill="#d8d8d8"/>
 </g>
 <!-- path select arrow -->
 <path d="M22.400,544v21.500l4.800,-4.600 3.200,7 3,-1.400 -3.200,-6.900 6.800,-.3z" fill="#d8d8d8"/>
 <!-- ellipse -->
 <ellipse cx="29" cy="595.300" rx="11.200" ry="9.800" fill="#727272" stroke="#d8d8d8" stroke-width="1.600"/>
 <!-- hand -->
 <path d="M26.500,645.500c-2,-2.200 -4.300,-6.300 -6.600,-9.800 -1,-1.500 .6,-2.900 2,-1.700l3.600,3.300 .3,-11.500c0,-1.700 2.300,-1.700 2.400,0l.4,6.500 .5,-8c.1,-1.700 2.500,-1.700 2.500,0l.1,8 1.200,-6.800c.3,-1.600 2.500,-1.300 2.400,.3l-.6,7.600 1.800,-4.800c.6,-1.400 2.400,-.8 2.100,.7 -.7,3.400 -1.100,7.800 -1.700,11.200 -.5,3 -1.700,4.200 -3,5.200 -2.200,1.200 -5.600,1.500 -7.400,-.2z" fill="#d8d8d8"/>
 <!-- zoom -->
 <g stroke="#d8d8d8" fill="none">
  <circle cx="27" cy="670.500" r="8.600" stroke-width="2"/>
  <path d="M33.600,677.300l7,6.900" stroke-width="3" stroke-linecap="round"/>
  <path d="M24.500,666.300c3,-1.200 5.800,.2 6.800,2.800" stroke-width="1.300"/>
 </g>
 <!-- gradient tool (selected) -->
 <defs><linearGradient id="gt" x1="0" x2="1" y1="0" y2="0"><stop offset="0" stop-color="#2c2c2c"/><stop offset="1" stop-color="#d0d0d0"/></linearGradient></defs>
 <rect x="19.300" y="703.700" width="21.800" height="16.900" fill="url(#gt)" stroke="#d8d8d8" stroke-width="1.600"/>
 <!-- default colors / swap -->
 <rect x="14.600" y="748.600" width="9" height="9" fill="#e4e4e4"/>
 <rect x="9.800" y="743.800" width="8.400" height="8.400" fill="#111" stroke="#e4e4e4" stroke-width="1.300"/>
 <g stroke="#d8d8d8" stroke-width="1.600" fill="#d8d8d8">
  <path d="M38,745.300h6.700v7.500" fill="none"/>
  <path d="M34.600,745.300l4.200,-3.200v6.400z M44.700,756.400l-3.200,-4.200h6.400z" stroke="none"/>
 </g>
 <!-- fg/bg swatches -->
 <rect x="23.500" y="781" width="27.700" height="26.800" rx="1.500" fill="#ffffff" stroke="#3a3a3a" stroke-width="1"/>
 <rect x="8.500" y="766" width="27.800" height="27.300" fill="#ffffff" stroke="#3a3a3a" stroke-width="1"/>
 <rect x="11.300" y="768.800" width="22.400" height="21.800" fill="#4f62c1" stroke="#2a2a2a" stroke-width=".8"/>
 <!-- quick mask -->
 <rect x="17.600" y="826.400" width="24.400" height="20" stroke="#d8d8d8" stroke-width="1.500"/>
 <circle cx="29.700" cy="836.500" r="6.300" stroke="#d8d8d8" stroke-width="1.400" stroke-dasharray="1.800 1.500"/>
</svg>


  <div id="panel">
    <div class="titlebar"></div><div class="tline"></div>
    <div class="tabbar"></div>
    <div class="tab on" style="left:0;width:60.5px;padding-left:2px;line-height:37px">图层</div>
    <div class="tab" style="left:60.5px;width:47.5px">3D</div>
    <div class="tab" style="left:108px;width:59px">通道</div>
    <!-- filter row -->
    <div class="field" style="left:6.5px;top:76.5px;width:126px;height:28.5px;background:#444;border-color:#3d3d3d"></div>
    <div class="lbl" style="left:40px;top:80px;color:#e6e6e6;font-size:17.5px">类型</div>
    <div class="sep" style="top:110px"></div>
    <!-- blend row -->
    <div class="field" style="left:6.5px;top:120.5px;width:174px;height:28px;background:#4e4e4e;border-color:#5a5a5a"></div>
    <div class="lbl" style="left:19px;top:124px;font-size:17.5px;color:#7e7e7e">正常</div>
    <div class="lbl dim" style="left:193.5px;top:122px;font-size:17.500px">不透明度:</div>
    <div class="field" style="left:278.5px;top:120px;width:79.5px;height:25.5px;background:#494949;border-color:#505050"></div>
    <div class="lbl dim" style="left:282.5px;top:122.500px;font-size:16.500px;color:#777">100%</div>
    <div class="abs" style="left:335.5px;top:121px;width:1px;height:23.5px;background:#555"></div>
    <div class="sep" style="top:154.5px"></div>
    <!-- lock row -->
    <div class="lbl dim" style="left:10.5px;top:166px;font-size:17.5px">锁定:</div>
    <div class="lbl dim" style="left:229px;top:166px;font-size:17.5px">填充:</div>
    <div class="field" style="left:278.5px;top:163px;width:79.5px;height:27px;background:#494949;border-color:#505050"></div>
    <div class="lbl dim" style="left:282.5px;top:166px;font-size:16.5px;color:#777">100%</div>
    <div class="abs" style="left:335.5px;top:164px;width:1px;height:25px;background:#555"></div>
    <!-- layers -->
    <div id="scrollcol"><i></i></div><div id="empty"></div>
    <div class="row" style="top:199.5px;height:62px">
      <div class="eyecol"></div>
      <div class="thumb checker" style="left:52px;top:8.5px"></div>
      <div class="thumb" style="left:113px;top:9px;width:35.200px;height:45px;border:none;background:linear-gradient(#fff 0,#fff 43%,#000 58%,#000 100%);box-shadow:0 0 0 .5px #2a2a2a"></div>
      <div class="lname" style="left:165px;top:23px">图层 1</div>
    </div>
    <div class="row" style="top:261.5px;height:62px">
      <div class="eyecol"></div>
      <div class="thumb checker" style="left:52px;top:8.5px"></div>
      <div class="lname" style="left:103.5px;top:23.5px">8</div>
    </div>
    <div class="row" style="top:323.5px;height:63px">
      <div class="eyecol"></div>
      <div class="thumb" style="left:52px;top:8px;background:#4f62c1"></div>
      <div class="lname" style="left:104px;top:23px">背景</div>
    </div>
    <div id="botbar"></div>
    <div id="grip"></div>
    <!--PICONS-->
  </div>

  <svg id="picons2" class="abs" style="left:0;top:0" width="1533" height="844" viewBox="0 0 1533 844" fill="none">
 <!-- title bar: collapse + close -->
 <g stroke="#e6e6e6" stroke-width="1.500" fill="none">
  <path d="M1391,54.700l-3.600,3.700 3.600,3.700 M1397.500,54.700l-3.600,3.700 3.600,3.700"/>
  <path d="M1413.200,54.200l8.600,8.600 M1421.800,54.200l-8.600,8.600" stroke-width="1.700"/>
 </g>
 <!-- panel menu -->
 <path d="M1406.800,83.500h15.200 M1406.800,86.700h15.200 M1406.800,89.900h15.200 M1406.800,93.100h15.200" stroke="#c8c8c8" stroke-width="1.700"/>
 <!-- search -->
 <g stroke="#e0e0e0" fill="none">
  <circle cx="1060.800" cy="137" r="4.300" stroke-width="1.900"/>
  <path d="M1064.200,140.600l6.300,5" stroke-width="3" stroke-linecap="round"/>
 </g>
 <path d="M1156.800,138l4.600,4 4.600,-4" stroke="#d0d0d0" stroke-width="1.400"/>
 <!-- filter icons -->
 <g stroke="#dcdcdc" stroke-width="1.600">
  <rect x="1198" y="130.200" width="16" height="13.400"/>
 </g>
 <path d="M1200.800,141.200l3.500,-5.600 2.600,3.600 1.400,-2 3.400,4z" fill="#dcdcdc"/>
 <circle cx="1241.500" cy="136.500" r="7" stroke="#dcdcdc" stroke-width="1.600"/>
 <path d="M1246.700,131.600a7,7 0 0 1 -10.200,10.100z" fill="#dcdcdc"/>
 <path d="M1270.300,129.600h14.800v4.400h-1.700c-.2,-1.400 -.8,-2 -2.200,-2h-1.800v10.200c0,.8 .5,1.100 2.200,1.200v1.600h-7.800v-1.600c1.700,-.1 2.200,-.4 2.200,-1.200v-10.200h-1.800c-1.400,0 -2,.6 -2.200,2h-1.700z" fill="#dcdcdc"/>
 <g stroke="#dcdcdc" stroke-width="1.500">
  <rect x="1308.400" y="131.300" width="11.400" height="11"/>
  <g fill="#535353"><rect x="1306.600" y="129.500" width="3.400" height="3.400"/><rect x="1318.200" y="129.500" width="3.400" height="3.400"/><rect x="1306.600" y="140.600" width="3.400" height="3.400"/><rect x="1318.200" y="140.600" width="3.400" height="3.400"/></g>
 </g>
 <path d="M1347.800,136.800v-6.700h6.200l3.600,3.700v9.500h-5.600" stroke="#dcdcdc" stroke-width="1.500"/>
 <path d="M1353.800,130.300v3.800h3.700" stroke="#dcdcdc" stroke-width="1.200"/>
 <rect x="1343.400" y="137.300" width="8.400" height="8.400" fill="#dcdcdc"/>
 <rect x="1384.600" y="124.800" width="12.600" height="25.400" rx="6.300" fill="#424242"/>
 <circle cx="1390.800" cy="130.800" r="5.900" fill="#dedede"/>
 <!-- blend / opacity chevrons (disabled) -->
 <g stroke="#6a6a6a" stroke-width="1.400">
  <path d="M1203.800,182.200l4.400,3.900 4.400,-3.900"/>
  <path d="M1380.600,181.200l4.400,3.900 4.400,-3.900"/>
  <path d="M1380.600,224.600l4.400,3.900 4.400,-3.900"/>
 </g>
 <!-- lock icons (disabled) -->
 <g>
  <rect x="1105.600" y="216.800" width="15" height="15" stroke="#9a9a9a" stroke-width="1.400"/>
  <path d="M1106.300,217.500h4.600v4.600h-4.600z M1115.500,217.500h4.600v4.600h-4.600z M1110.900,222.100h4.600v4.600h-4.600z M1106.300,226.700h4.600v4.600h-4.600z M1115.500,226.700h4.600v4.600h-4.600z" fill="#9a9a9a"/>
  <path d="M1155.600,214.200c.9,.3 1,1.100 .5,1.900l-7.200,10.500 -2.700,-2 7.900,-9.800c.4,-.5 .9,-.7 1.500,-.6z" fill="#9a9a9a"/>
  <path d="M1145.400,225.600l2.600,2c.4,2.300 -2.300,4.400 -8.500,3.600 1.900,-.8 2.100,-1.800 2.600,-3.100 .5,-1.500 1.600,-2.600 3.300,-2.500z" fill="#9a9a9a"/>
  <g stroke="#9a9a9a" stroke-width="1.400" fill="#9a9a9a">
   <path d="M1178.300,216.500v15 M1170.800,224h15" fill="none"/>
   <path d="M1178.300,214.400l2.800,3.600h-5.600z M1178.300,233.600l2.800,-3.600h-5.600z M1168.700,224l3.600,-2.800v5.600z M1187.900,224l-3.600,-2.800v5.600z" stroke="none"/>
  </g>
  <g stroke="#9a9a9a" stroke-width="1.500">
   <path d="M1206.200,215v14.600h14.600 M1202,219.400h11.600l3.600,3.600v9.800"/>
   <path d="M1213.400,219.400v3.800h3.800" stroke-width="1.100"/>
   <path d="M1219.500,216.500l2,-2 M1219.500,231.500l2.200,2.200" stroke-dasharray="1 1"/>
  </g>
  <path d="M1240.300,223.500v-3.300a4.700,4.700 0 0 1 9.400,0v3.300" stroke="#9a9a9a" stroke-width="1.900"/>
  <path d="M1237.600,222.600h14.800v9.200h-14.800z" fill="#9a9a9a"/>
  <circle cx="1245" cy="226.800" r="1.500" fill="#535353"/>
 </g>
 <!-- eyes -->
 <g id="eyes">
  <g fill="#dedede">
   <path d="M1051.800,280.700c3.200,-4.200 6.400,-6 9.700,-6s6.500,1.800 9.700,6c-3.200,4.200 -6.400,6 -9.700,6s-6.500,-1.800 -9.700,-6z"/>
   <path d="M1051.800,341.700c3.200,-4.200 6.400,-6 9.700,-6s6.500,1.800 9.700,6c-3.200,4.200 -6.400,6 -9.700,6s-6.500,-1.800 -9.700,-6z"/>
   <path d="M1051.800,403.300c3.200,-4.200 6.400,-6 9.700,-6s6.500,1.800 9.700,6c-3.200,4.200 -6.400,6 -9.700,6s-6.500,-1.800 -9.700,-6z"/>
  </g>
  <g fill="#4a4a4a"><circle cx="1061.500" cy="280.500" r="3.900"/><circle cx="1061.500" cy="341.500" r="3.900"/><circle cx="1061.500" cy="403.100" r="3.900"/></g>
  <g fill="#dedede"><circle cx="1062.800" cy="279.100" r="1"/><circle cx="1062.800" cy="340.100" r="1"/><circle cx="1062.800" cy="401.700" r="1"/></g>
 </g>
 <!-- layer link -->
 <g stroke="#f3dada" stroke-width="1.500">
  <rect x="1133.400" y="270.800" width="8.400" height="9" rx="3.600"/>
  <rect x="1133.400" y="280.300" width="8.400" height="9" rx="3.600"/>
 </g>
 <!-- thumbnails content -->
 <path d="M1101.600,274.500l3.400,2.600 2.200,-1.200 2.600,1.300 3.400,-2.700 -1.400,5 -4.400,2.400 -4.600,-2.400z" fill="#e6d440"/>
 <g>
  <circle cx="1107.400" cy="329.400" r="3.700" stroke="#e6d440" stroke-width="2.800"/>
  <path d="M1103.200,337.300l2.600,-3.600h3.400l2.600,3.600h-2.300l-1.300,-1.700h-1.500l-1.300,1.700z" fill="#e6d440"/>
 </g>
 <!-- background lock -->
 <g stroke="#e0e0e0" stroke-width="1.500">
  <path d="M1371.500,401v-2.800a3.500,3.500 0 0 1 7,0v2.800"/>
  <rect x="1368.400" y="401" width="13.200" height="9.400"/>
 </g>
 <circle cx="1375" cy="405.700" r="1.300" fill="#e0e0e0"/>
 <!-- bottom bar -->
 <g stroke="#979797" stroke-width="1.700">
  <path d="M1133.500,546.300h-3.700a4.300,4.300 0 0 0 0,8.600h3.700 M1137.500,546.300h3.700a4.300,4.300 0 0 1 0,8.600h-3.700 M1130.500,550.600h10"/>
 </g>
 <text x="1168.500" y="557" font-family="Liberation Sans, sans-serif" font-style="italic" font-size="21" fill="#8c8c8c">fx</text>
 <path d="M1186.500,559.300l2.200,1.700 2.200,-1.700" stroke="#8c8c8c" stroke-width="1.100"/>
 <rect x="1207.800" y="542.200" width="19.200" height="14.500" rx="1" fill="#a0a0a0"/>
 <circle cx="1217.400" cy="549.500" r="4.100" fill="#535353"/>
 <circle cx="1258.100" cy="549.900" r="7" stroke="#dedede" stroke-width="1.600"/>
 <path d="M1263.300,545a7,7 0 0 1 -10.200,10.100z" fill="#dedede"/>
 <path d="M1266.200,559.300h5.600l-2.800,3z" fill="#f0f0f0"/>
 <path d="M1289.200,542.600a1,1 0 0 1 1,-1h5.400l1.400,1.800h9.300a1,1 0 0 1 1,1v12.400a1,1 0 0 1 -1,1h-16.100a1,1 0 0 1 -1,-1z" fill="#d2d2d2"/>
 <rect x="1331.900" y="542.400" width="14.600" height="15.200" stroke="#e2e2e2" stroke-width="1.600"/>
 <path d="M1339.200,545.600v8.800 M1334.800,550h8.800" stroke="#e2e2e2" stroke-width="2"/>
 <g stroke="#8e8e8e" stroke-width="1.500">
  <path d="M1371.600,544.400h15.600 M1376.400,544.200v-2.600h6v2.600"/>
  <path d="M1373.400,545.600l.8,12.800h10.400l.8,-12.800"/>
  <path d="M1377,547.600v8.600 M1379.400,547.600v8.600 M1381.800,547.600v8.600" stroke-width="1.200"/>
 </g>
 <!-- gripper -->
 <path d="M1220.500,570.600v5.600 M1223.500,570.600v5.600 M1226.500,570.600v5.600 M1229.500,570.600v5.600 M1232.500,570.600v5.600 M1235.500,570.600v5.600 M1238.500,570.600v5.600 M1241.500,570.600v5.600 M1244.500,570.600v5.600 M1247.500,570.600v5.600" stroke="#3c3c3c" stroke-width="1.200" stroke-dasharray="1 1"/>
</svg>

  <svg id="anno" viewBox="0 0 1533 844">
    <rect x="1137.6" y="233.2" width="62.8" height="70.5" rx="2.5" fill="none" stroke="#ee271b" stroke-width="5"/>
    <polygon points="1182.7,309.3 1175.6,327 1181.8,324.2 1192,380 1199.9,420 1219.8,518.5 1204.8,420 1198.8,380 1189.8,322.6 1194.6,323.8" fill="#f02a1c"/>
    <rect x="3.6" y="698.4" width="80.8" height="38.2" rx="2.5" fill="none" stroke="#ee271b" stroke-width="4.6"/>
  </svg>
</div>
</body>
</html>
